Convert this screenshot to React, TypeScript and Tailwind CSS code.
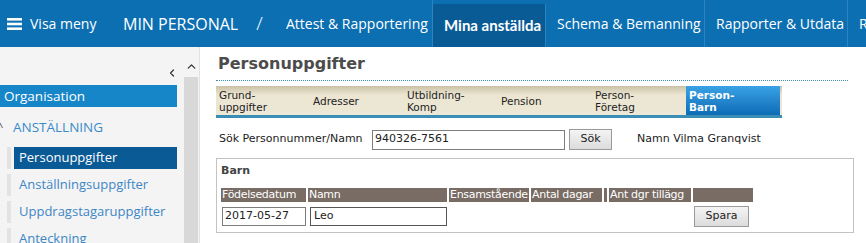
import { ChevronLeft, ChevronUp } from 'lucide-react';

const ui = "font-['Open_Sans','Noto_Sans',sans-serif]";
const old = "font-['DejaVu_Sans','Verdana',sans-serif]";

const navItems = [
  { name: 'Attest & Rapportering', active: false, width: 'w-[158px]' },
  { name: 'Mina anställda', active: true, width: 'w-[113px]' },
  { name: 'Schema & Bemanning', active: false, width: 'w-[159px]' },
  { name: 'Rapporter & Utdata', active: false, width: 'w-[143px]' },
  { name: 'Rapporter', active: false, width: 'w-[120px]' },
];

const subItems = ['Personuppgifter', 'Anställningsuppgifter', 'Uppdragstagaruppgifter', 'Anteckning'];

const tabs = [
  { l1: 'Grund-', l2: 'uppgifter' },
  { l1: 'Adresser' },
  { l1: 'Utbildning-', l2: 'Komp' },
  { l1: 'Pension' },
  { l1: 'Person-', l2: 'Företag' },
  { l1: 'Person-', l2: 'Barn', active: true },
];

const columns = [
  { name: 'Födelsedatum', w: 'w-[85px]' },
  { name: 'Namn', w: 'w-[139px]' },
  { name: 'Ensamstående', w: 'w-[80px]' },
  { name: 'Antal dagar', w: 'w-[71px]' },
  { name: '', w: 'w-[3px]' },
  { name: 'Ant dgr tillägg', w: 'w-[82px]' },
  { name: '', w: 'w-[60px]' },
];

function TopBar() {
  return (
    <header className={`${ui} flex h-[47px] items-stretch overflow-hidden whitespace-nowrap bg-[#0c6fb2] text-white`}>
      <div className="flex w-[116px] shrink-0 items-center pl-[7px]">
        <svg width="15" height="12" viewBox="0 0 15 12" className="mr-[8px]">
          <rect y="0" width="15" height="2.6" fill="white" />
          <rect y="4.7" width="15" height="2.6" fill="white" />
          <rect y="9.4" width="15" height="2.6" fill="white" />
        </svg>
        <span className="text-[14px]">Visa meny</span>
      </div>
      <div className="flex w-[159px] shrink-0 items-center pl-[7px] text-[16px]">
        <span>MIN PERSONAL</span>
        <span className="ml-[18px] text-[19px] font-light">/</span>
      </div>
      {navItems.map((item) => (
        <div
          key={item.name}
          className={`${item.width} flex shrink-0 items-center border-r border-[#2b83c0] px-[11px] ${
            item.active
              ? "mt-[4px] bg-[#095b95] font-['Lato',sans-serif] text-[15px] font-bold"
              : 'text-[14px]'
          }`}
        >
          {item.name}
        </div>
      ))}
    </header>
  );
}

function Sidebar() {
  return (
    <aside className={`${ui} flex w-[200px] shrink-0 border-r border-[#e2e2e2] bg-[#f4f4f4]`}>
      <div className="w-[179px] shrink-0">
        <div className="flex h-[38px] items-end justify-end pb-[6px] pr-[1px] text-[#333]">
          <ChevronLeft size={12} strokeWidth={2.4} />
        </div>
        <div className="flex h-[22px] w-[177px] items-center bg-[#1786c9] pl-[4px] text-[13.5px] text-white">
          Organisation
        </div>
        <div className="flex h-[40px] items-center text-[13.5px] text-[#3b8bcb]">
          <span className="-ml-[3px] w-[16px] text-[11px] text-[#444]">^</span>
          ANSTÄLLNING
        </div>
        <div className="flex flex-col gap-[5px]">
          {subItems.map((s, i) => (
            <div key={s} className="flex h-[22px] items-stretch pl-[7px]">
              <div className="w-[4px] bg-[#e3e3e3]" />
              <div
                className={`ml-[3px] flex w-[163px] items-center pl-[5px] text-[13px] ${
                  i === 0 ? 'bg-[#0a5a95] text-white' : 'text-[#3d86c6]'
                }`}
              >
                {s}
              </div>
            </div>
          ))}
        </div>
      </div>
      <div className="ml-[5px] flex w-[14px] flex-col">
        <div className="flex h-[30px] items-end justify-center pb-[4px] text-[#333]">
          <ChevronUp size={13} strokeWidth={2.4} />
        </div>
        <div className="flex-1 bg-[#d8d8d8]" />
      </div>
    </aside>
  );
}

function Main() {
  return (
    <main className={`${old} flex-1 bg-white pl-[16px] pt-[5px] text-[11px] text-[#222]`}>
      <h1 className="pl-[2px] text-[16px] font-bold leading-[24px] text-[#4c4c4c]">Personuppgifter</h1>
      <div className="mt-[4px] w-[632px] border-b border-dotted border-[#3c8fb3]" />
      <div className="mt-[5px] flex h-[32px] w-[566px] border-b-[3px] border-[#3a8db4] bg-gradient-to-b from-[#cbc2a6] via-[#ebe5d1] via-30% to-[#ede8d7]">
        {tabs.map((t, i) => (
          <div
            key={i}
            className={`flex w-[94px] flex-col justify-center pl-[3px] text-[10.5px] leading-[12px] ${
              t.active ? 'bg-gradient-to-b from-[#3aa2e6] to-[#0b6cb6] font-bold text-white' : 'text-[#222]'
            }`}
          >
            <span>{t.l1}</span>
            {t.l2 && <span>{t.l2}</span>}
          </div>
        ))}
      </div>
      <div className="mt-[11px] flex h-[21px] items-center pl-[3px]">
        <span className="w-[153px]">Sök Personnummer/Namn</span>
        <div className="flex h-[20px] w-[193px] items-center border border-[#7d7d7d] pl-[2px]">940326-7561</div>
        <button className="ml-[4px] h-[21px] w-[43px] border border-[#9a9a9a] bg-gradient-to-b from-[#f4f4f4] to-[#dcdcdc] text-[11px]">
          Sök
        </button>
        <span className="ml-[25px]">Namn Vilma Granqvist</span>
      </div>
      <div className="mt-[8px] h-[75px] w-[638px] border border-[#c3c3c3] pl-[4px] pt-[5px]">
        <div className="font-bold leading-[14px] text-[#444]">Barn</div>
        <div className="mt-[10px] flex h-[14px] gap-[2px]">
          {columns.map((c, i) => (
            <div
              key={i}
              className={`${c.w} shrink-0 overflow-hidden whitespace-nowrap bg-[#786c64] pl-[1px] text-[11px] leading-[14px] tracking-[-0.3px] text-white`}
            >
              {c.name}
            </div>
          ))}
        </div>
        <div className="mt-[5px] flex items-start">
          <div className="ml-[1px] flex h-[19px] w-[84px] items-center border border-[#7d7d7d] pl-[2px]">2017-05-27</div>
          <div className="ml-[4px] flex h-[19px] w-[137px] items-center border border-[#555] pl-[3px]">Leo</div>
          <button className="-mt-[1px] ml-[247px] h-[21px] w-[55px] border border-[#9a9a9a] bg-gradient-to-b from-[#f4f4f4] to-[#dcdcdc] text-[11px]">
            Spara
          </button>
        </div>
      </div>
    </main>
  );
}

export default function App() {
  return (
    <div className="h-[243px] w-[866px] overflow-hidden bg-white">
      <TopBar />
      <div className="flex h-[196px]">
        <Sidebar />
        <Main />
      </div>
    </div>
  );
}
